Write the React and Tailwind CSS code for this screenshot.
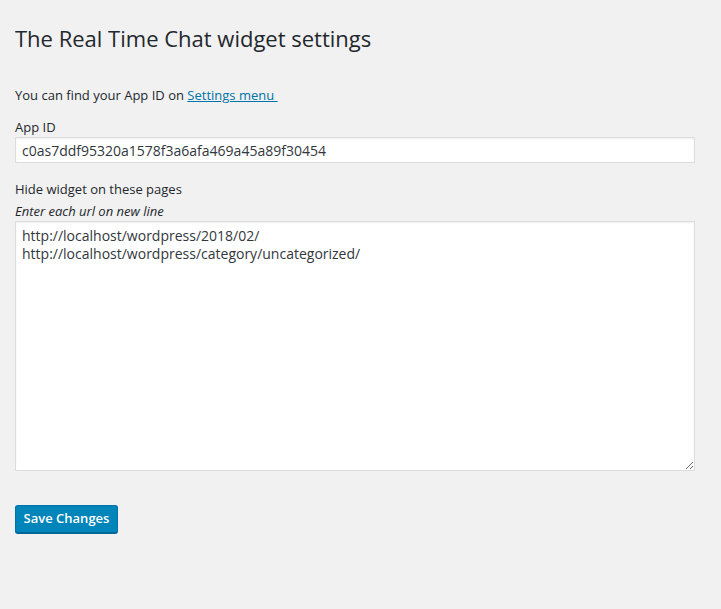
import React from 'react';

const font = { fontFamily: '"Open Sans", "Noto Sans", sans-serif' };

export default function App() {
  return (
    <div className="min-h-[609px] w-full bg-[#f1f1f1] text-[#23282d]" style={font}>
      <div className="pl-[15px] pr-[26px]">
        <h1 className="pt-[24px] text-[22px] leading-[29px] font-normal">The Real Time Chat widget settings</h1>

        <p className="mt-[32px] text-[13px] leading-[20px]">
          You can find your App ID on{' '}
          <a href="#" className="text-[#0073aa] underline">Settings menu&nbsp;</a>
        </p>

        <label className="mt-[12px] block text-[13px] leading-[20px]">App ID</label>
        <input
          type="text"
          defaultValue="c0as7ddf95320a1578f3a6afa469a45a89f30454"
          className="block h-[26px] w-full border border-[#ddd] bg-white px-[6px] text-[14px] text-[#32373c] shadow-[inset_0_1px_2px_rgba(0,0,0,0.07)] outline-none"
        />

        <label className="mt-[16px] block text-[13px] leading-[20px]">Hide widget on these pages</label>
        <p className="mt-[3px] text-[13px] italic leading-[19px]">Enter each url on new line</p>
        <textarea
          defaultValue={'http://localhost/wordpress/2018/02/\nhttp://localhost/wordpress/category/uncategorized/'}
          className="block h-[250px] w-full border border-[#ddd] bg-white px-[6px] pt-[5px] text-[14px] leading-[18px] text-[#32373c] shadow-[inset_0_1px_2px_rgba(0,0,0,0.07)] outline-none"
        />

        <button className="mt-[34px] h-[28px] w-[103px] rounded-[3px] border border-[#0073aa] border-b-[#006799] bg-[#0085ba] text-[13px] font-semibold text-white shadow-[0_1px_0_#006799]">
          Save Changes
        </button>
      </div>
    </div>
  );
}
